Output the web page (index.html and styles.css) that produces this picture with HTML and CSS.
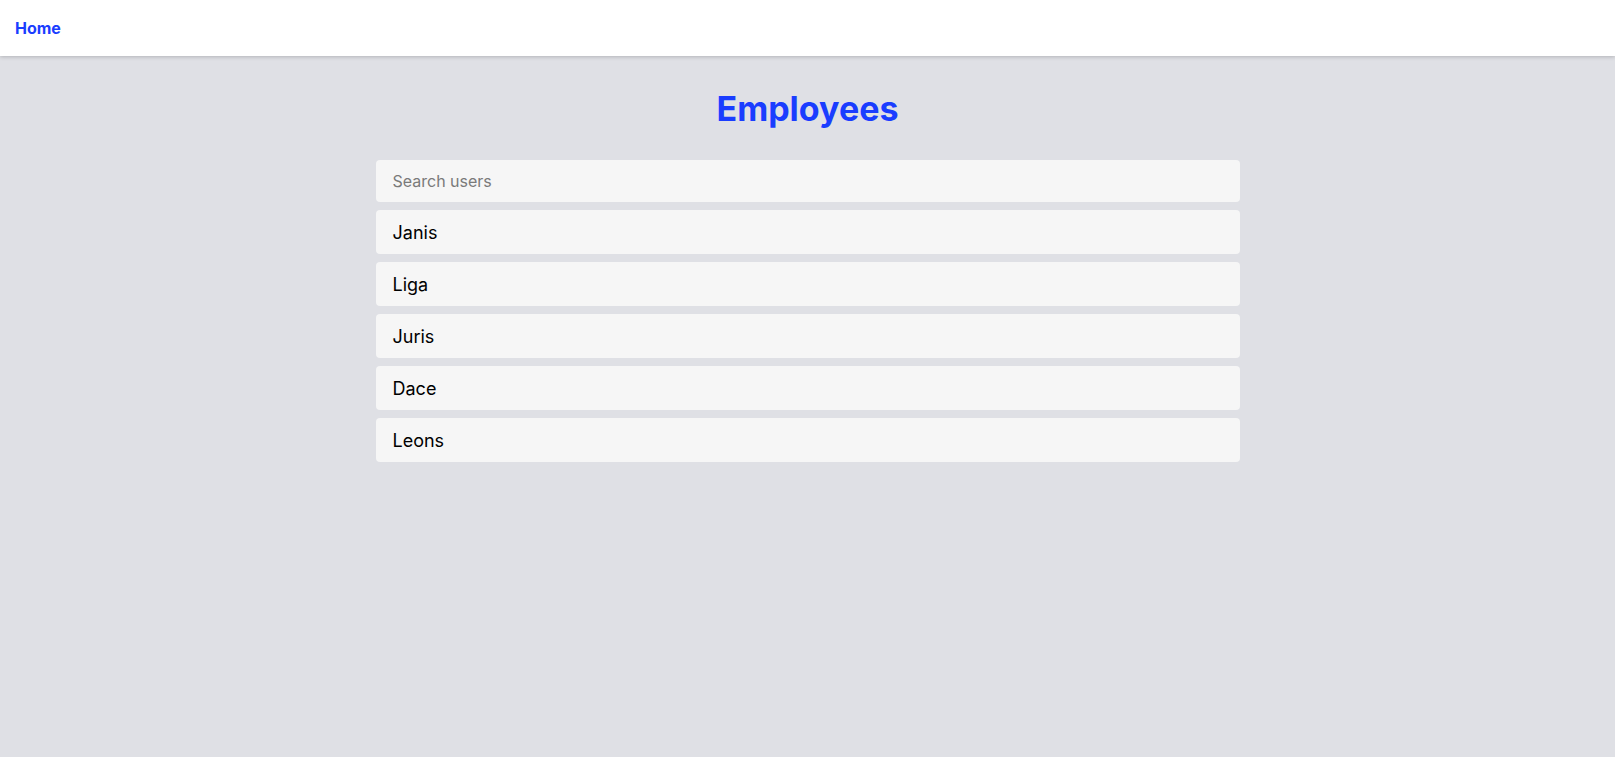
FILE: index.html
```html
<!DOCTYPE html>
<html lang="en">
<head>
    <meta charset="UTF-8">
    <meta name="viewport" content="width=device-width, initial-scale=1.0">
    <title>Employees</title>
    <link rel="stylesheet" href="styles.css">
</head>
<body>
    <!-- Top bar -->
    <nav class="navbar">
        <a href="#" class="nav-link">Home</a>
    </nav>

    <main class="content">
        <h1 class="title">Employees</h1>

        <div class="list">
            <input type="text" class="search" placeholder="Search users">
            <div class="item">Janis</div>
            <div class="item">Liga</div>
            <div class="item">Juris</div>
            <div class="item">Dace</div>
            <div class="item">Leons</div>
        </div>
    </main>
</body>
</html>
```

FILE: styles.css
```css
body { margin: 0; font-family: Inter, "Noto Sans", Arial, sans-serif; background-color: #dfe0e5; color: #000; min-height: 100vh; }

.navbar {
    height: 56px;
    background-color: #fff;
    box-shadow: 0 1px 4px rgba(0, 0, 0, 0.2);
    display: flex;
    align-items: center;
    padding: 0 15px;
}

.nav-link {
    color: #1a3dff;
    font-weight: 700;
    font-size: 16px;
    text-decoration: none;
}

.content {
    display: flex;
    flex-direction: column;
    align-items: center;
    padding-top: 30px;
}

.title {
    margin: 0 0 28px;
    font-size: 34px;
    line-height: 46px;
    font-weight: 700;
    color: #1a3dff;
}

.list {
    width: 864px;
    display: flex;
    flex-direction: column;
    gap: 8px;
}

.search {
    height: 42px;
    box-sizing: border-box;
    border: none;
    border-radius: 4px;
    background-color: #f6f6f6;
    padding: 0 17px;
    font-family: inherit;
    font-size: 16px;
    color: #000;
    outline: none;
}

.search::placeholder { color: #7a7a7a; }

.item {
    height: 44px;
    box-sizing: border-box;
    border-radius: 4px;
    background-color: #f6f6f6;
    padding: 0 17px;
    display: flex;
    align-items: center;
    font-size: 18px;
}
```
